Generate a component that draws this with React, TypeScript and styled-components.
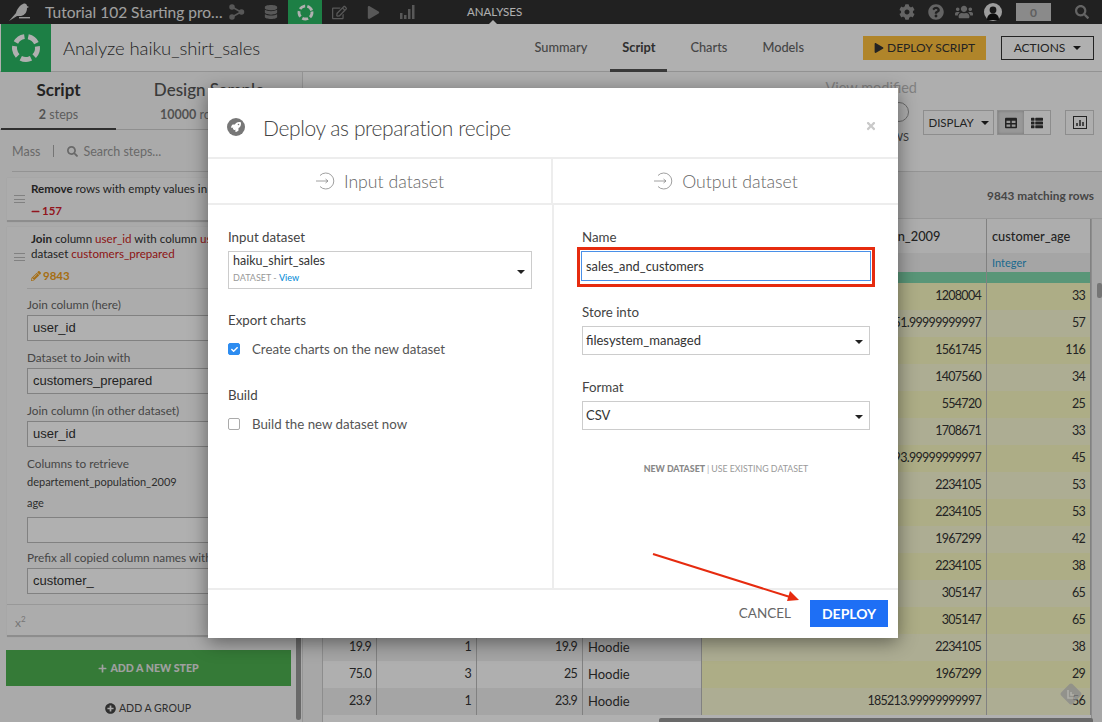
import React from "react";
import styled, { createGlobalStyle } from "styled-components";
import {
  FaCog, FaQuestionCircle, FaUsers, FaSearch, FaPencilAlt, FaPlus, FaPlusCircle, FaPlay,
  FaDatabase, FaRegEdit, FaTable, FaThList, FaCheck, FaTimes, FaRocket, FaMinus,
} from "react-icons/fa";

const SANS = `"Lato", "Open Sans", "Liberation Sans", sans-serif`;

const Global = createGlobalStyle`
  html, body { margin: 0; padding: 0; background: #fff; }
  * { box-sizing: border-box; }
  body { font-family: ${SANS}; color: #333; }
`;

const Page = styled.div`
  position: relative; width: 1102px; height: 722px; overflow: hidden;
  display: flex; flex-direction: column; background: #fff;
`;

/* top bar */
const TopBar = styled.div`
  height: 24px; flex: none; background: #313131; display: flex; align-items: center; position: relative; color: #ddd;
`;
const Logo = styled.svg` margin-left: 8px; width: 24px; height: 20px; flex: none; `;
const ProjectName = styled.div`
  width: 188px; padding-left: 13px; flex: none; font-size: 15.5px; color: #e8e8e8; white-space: nowrap;
`;
const NavIcon = styled.div<{ $active?: boolean }>`
  width: 34px; height: 24px; flex: none; display: flex; align-items: center; justify-content: center;
  background: ${(p) => (p.$active ? "#2ab864" : "transparent")};
  color: ${(p) => (p.$active ? "#fff" : "#808080")};
`;
const Section = styled.div`
  margin-left: 43px; width: 50px; font-size: 11.5px; color: #fff; text-align: center; position: relative; line-height: 24px; white-space: nowrap;
  &::after {
    content: ""; position: absolute; left: 22px; bottom: 0; border: 4px solid transparent; border-top: 0; border-bottom-color: #fff;
  }
`;
const TopRight = styled.div` margin-left: auto; display: flex; align-items: center; color: #919191; `;
const TopIcon = styled.div<{ $w: number }>`
  width: ${(p) => p.$w}px; display: flex; justify-content: center; align-items: center; height: 24px; flex: none;
`;
const Counter = styled.div`
  width: 35px; height: 18px; background: #c8c8c8; color: #8a8a8a; font-size: 12px; font-weight: 700;
  display: flex; align-items: center; justify-content: center; margin: 0 11px 0 8px;
`;

/* sub header */
const SubHeader = styled.div`
  height: 48px; flex: none; display: flex; align-items: center; border-bottom: 1px solid #d5d5d5; padding-left: 1px;
`;
const GreenSquare = styled.div`
  width: 50px; height: 48px; background: #2ab864; display: flex; align-items: center; justify-content: center; flex: none;
`;
const PageTitle = styled.div` margin-left: 12px; font-size: 18.5px; font-weight: 300; letter-spacing: -0.1px; color: #333; `;
const Tabs = styled.div` margin-left: auto; display: flex; gap: 11px; height: 48px; margin-right: 47px; `;
const Tab = styled.div<{ $on?: boolean }>`
  padding: 0 12px; font-size: 12.8px; line-height: 47px; font-weight: ${(p) => (p.$on ? 700 : 500)}; color: ${(p) => (p.$on ? "#444" : "#666")};
  border-bottom: 3px solid ${(p) => (p.$on ? "#555" : "transparent")};
`;
const DeployScript = styled.div`
  width: 123px; height: 24px; background: #ffc13d; color: #333; font-size: 12px; display: flex; align-items: center; justify-content: center; gap: 3px;
`;
const Actions = styled.div`
  width: 93px; height: 24px; margin: 0 8px 0 15px; border: 1px solid #333; color: #333; font-size: 12px; display: flex; align-items: center; justify-content: center; gap: 8px;
`;
const Caret = styled.span<{ $c?: string }>`
  display: inline-block; width: 0; height: 0; border: 4px solid transparent; border-bottom: 0; border-top: 4.5px solid ${(p) => p.$c || "#222"}; flex: none;
`;

/* main */
const Main = styled.div` flex: 1; display: flex; min-height: 0; `;
const LeftPanel = styled.div`
  width: 303px; flex: none; border-right: 1px solid #d8d8d8; background: #f7f7f7; display: flex; flex-direction: column; position: relative; overflow: hidden;
`;
const PanelTabs = styled.div` height: 58px; flex: none; display: flex; border-bottom: 1px solid #d0d0d0; padding-left: 1px; `;
const PanelTab = styled.div<{ $on?: boolean; $w: number }>`
  width: ${(p) => p.$w}px; text-align: center; border-bottom: ${(p) => (p.$on ? "2px solid #444" : "none")};
  height: 58px; white-space: nowrap;
`;
const PanelTabName = styled.div<{ $on?: boolean }>`
  font-size: 17px; line-height: 24px; margin-top: 6px; font-weight: ${(p) => (p.$on ? 700 : 500)}; color: ${(p) => (p.$on ? "#333" : "#555")};
`;
const PanelTabSub = styled.div<{ $pr?: number }>`
  font-size: 12.5px; line-height: 16px; margin-top: 5px; color: #888; padding-right: ${(p) => p.$pr || 0}px; b { color: #777; }
`;
const SearchRow = styled.div`
  height: 42px; flex: none; margin-left: 12px; padding-top: 1px; border-bottom: 1px solid #d5d5d5; display: flex; align-items: center; font-size: 12.5px; color: #999;
`;
const SearchSep = styled.span` width: 1px; height: 12px; background: #aaa; margin: 0 13px 0 13px; `;
const SearchHint = styled.span` margin-left: 5px; `;

const StepCard = styled.div<{ $h: number; $mt: number }>`
  margin: ${(p) => p.$mt}px 0 0 7px; width: 285px; height: ${(p) => p.$h}px; flex: none; background: #fafafa;
  border-bottom: 2px solid #ccc; position: relative; padding-left: 24px; box-shadow: 0 0 1px #ddd;
`;
const Handle = styled.div<{ $t: number }>`
  position: absolute; left: 7px; top: ${(p) => p.$t}px; width: 11px; height: 8px;
  border-top: 1px solid #bbb; border-bottom: 1px solid #bbb;
  &::after { content: ""; position: absolute; left: 0; right: 0; top: 2.5px; height: 1px; background: #bbb; }
`;
const StepLine = styled.div<{ $mt?: number }>`
  font-size: 11.6px; line-height: 15px; color: #333; white-space: nowrap; overflow: hidden; margin-top: ${(p) => p.$mt || 0}px;
  b { font-weight: 700; }
  em { font-style: normal; color: #c22; }
`;
const Delta = styled.div<{ $c: string; $mt: number }>`
  display: flex; align-items: center; gap: 2px; font-size: 11.5px; font-weight: 700; color: ${(p) => p.$c}; margin-top: ${(p) => p.$mt}px; line-height: 16px;
`;
const FieldsBox = styled.div` margin-left: -4px; `;
const Hr = styled.div` height: 1px; background: #ddd; margin: 4px 0 6px; `;
const FieldLabel = styled.div` font-size: 11.8px; line-height: 20px; color: #666; white-space: nowrap; `;
const Field = styled.div` height: 53px; `;
const SideInput = styled.div`
  height: 26px; width: 262px; border: 1px solid #bbb; background: #fff; padding-left: 5px; font-family: "Liberation Sans", sans-serif; font-size: 13px; line-height: 24px; color: #333;
`;
const EmptyInput = styled(SideInput)` margin: 2px 0 5px; `;
const SmallValue = styled.div<{ $h: number; $mt?: number }>`
  font-size: 11px; line-height: ${(p) => p.$h}px; color: #444; white-space: nowrap; margin-top: ${(p) => p.$mt || 0}px;
`;
const StepFoot = styled.div`
  position: absolute; left: 0; right: 0; bottom: 0; height: 31px; border-top: 1px solid #ddd; padding: 9px 0 0 8px; font-size: 12px; color: #aaa;
  sup { font-size: 8px; }
`;
const AddStep = styled.div`
  margin: 13px 0 0 6px; width: 285px; height: 36px; flex: none; background: #4db150; color: #e8e8e8; font-weight: 900; font-size: 10.6px;
  display: flex; align-items: center; justify-content: center; gap: 3px;
`;
const AddGroup = styled.div`
  margin-top: 16px; width: 296px; text-align: center; font-size: 10.6px; color: #444; display: flex; align-items: center; justify-content: center; gap: 3px;
`;
const PanelScroll = styled.div`
  position: absolute; left: 296px; width: 5px; top: 558px; height: 90px; border-radius: 3px; background: #999;
`;

/* right */
const RightPanel = styled.div` flex: 1; min-width: 0; display: flex; flex-direction: column; position: relative; `;
const Toolbar = styled.div`
  height: 100px; flex: none; display: flex; justify-content: flex-end; padding-right: 8px; border-bottom: 1px solid #d8d8d8; background: #fdfdfd;
`;
const ViewBlock = styled.div`
  width: 92px; margin-right: 5px; display: flex; flex-direction: column; align-items: flex-end; font-size: 14.5px; color: #bbb; white-space: nowrap; padding-top: 7px;
`;
const Toggle = styled.div` width: 20px; height: 20px; border-radius: 50%; border: 1px solid #999; margin: 6px 8px 0 0; `;
const Rows = styled.div` font-size: 11px; color: #555; margin: 8px 8px 0 0; `;
const ToolBtn = styled.div<{ $w: number; $ml: number }>`
  width: ${(p) => p.$w}px; margin-left: ${(p) => p.$ml}px; height: 25px; margin-top: 38px; border: 1px solid #ccc; display: flex; align-items: center; justify-content: center; gap: 7px; font-size: 11.5px; color: #333;
`;
const ToolGroup = styled.div` display: flex; margin: 38px 0 0 3px; height: 25px; border: 1px solid #ccc; width: 54px; `;
const ToolCell = styled.div<{ $on?: boolean }>`
  flex: 1; display: flex; align-items: center; justify-content: center; color: #333;
  background: ${(p) => (p.$on ? "#ddd" : "transparent")};
  box-shadow: ${(p) => (p.$on ? "inset 0 0 3px #aaa" : "none")};
`;
const Band = styled.div`
  height: 47px; flex: none; background: #f2f2f2; text-align: right; padding: 16px 8px 0 0; font-size: 11.8px; font-weight: 700; color: #666; border-bottom: 1px solid #ddd;
`;
const TableWrap = styled.div` flex: 1; display: flex; background: #f2f2f2; min-height: 0; `;
const Table = styled.div`
  margin-left: 19px; width: 770px; background: #fff; border-left: 1px solid #ccc; border-right: 1px solid #ccc; overflow: hidden; flex: none;
`;
const Cols = "54px 100px 106px 119px 285px 104px";
const HeadRow = styled.div`
  display: grid; grid-template-columns: ${Cols}; height: 34px; background: #fbfbfb;
`;
const TypeRow = styled.div` display: grid; grid-template-columns: ${Cols}; height: 19px; background: #efefef; `;
const BarRow = styled.div` display: grid; grid-template-columns: ${Cols}; height: 11px; background: #82d9ae; `;
const DataRow = styled.div<{ $alt: boolean }>`
  display: grid; grid-template-columns: ${Cols}; height: 27px; background: ${(p) => (p.$alt ? "#f0f0f0" : "#fefefe")};
`;
const HeadCell = styled.div`
  font-size: 12.8px; font-weight: 500; line-height: 34px; padding-left: 5px; border-right: 1px solid #bbb; white-space: nowrap; overflow: hidden; color: #333;
`;
const TypeCell = styled.div` font-size: 11px; line-height: 19px; padding-left: 5px; border-right: 1px solid #bbb; color: #2a9ad0; white-space: nowrap; overflow: hidden; `;
const BarCell = styled.div` border-right: 1px solid #bbb; `;
const Cell = styled.div<{ $num?: boolean; $y?: boolean; $alt?: boolean }>`
  font-size: ${(p) => (p.$num ? "12.5px" : "13px")}; letter-spacing: ${(p) => (p.$num ? "-0.7px" : "0")};
  line-height: 26px; padding: 0 5px; border-right: 1px solid #bbb; color: #333; white-space: nowrap; overflow: hidden;
  text-align: ${(p) => (p.$num ? "right" : "left")};
  background: ${(p) => (p.$y ? (p.$alt ? "#fbfbd5" : "#fbfbc2") : "transparent")};
`;
const RightThumb = styled.div` position: absolute; left: 794px; top: 211px; width: 5px; height: 15px; border-radius: 2px; background: #aaa; `;
const BottomThumb = styled.div` position: absolute; left: 356px; bottom: 0; width: 434px; height: 4px; border-radius: 2px 2px 0 0; background: #999; `;
const FeedMark = styled.svg` position: absolute; left: 755px; top: 609px; width: 26px; height: 26px; opacity: .75; `;

/* modal */
const Backdrop = styled.div` position: absolute; inset: 0; background: rgba(0,0,0,.31); `;
const Modal = styled.div`
  position: absolute; left: 208px; top: 88px; width: 690px; height: 550px; background: #fff; box-shadow: 0 4px 18px rgba(0,0,0,.45);
  display: flex; flex-direction: column;
`;
const ModalHead = styled.div`
  height: 71px; flex: none; display: flex; align-items: center; padding: 9px 0 0 19px; border-bottom: 2px solid #ededed; position: relative;
`;
const TitleBadge = styled.div`
  width: 18px; height: 18px; border-radius: 50%; background: #777; color: #fff; display: flex; align-items: center; justify-content: center; flex: none;
`;
const ModalTitle = styled.div` margin-left: 18px; font-size: 21px; font-weight: 300; letter-spacing: -0.4px; color: #444; `;
const Close = styled.div` position: absolute; left: 657px; top: 32px; color: #c9c9c9; line-height: 0; `;
const SectionRow = styled.div` height: 46px; flex: none; display: flex; border-bottom: 2px solid #ededed; `;
const SectionHead = styled.div<{ $w?: boolean }>`
  flex: 1; display: flex; align-items: center; justify-content: center; gap: 9px; font-size: 17.7px; font-weight: 300; color: #666;
  border-right: ${(p) => (p.$w ? "2px solid #ededed" : "0")};
  ${(p) => (p.$w ? "flex: 0 0 345px;" : "")}
`;
const Body = styled.div` flex: 1; display: flex; min-height: 0; `;
const ColLeft = styled.div` flex: 0 0 345px; border-right: 2px solid #ededed; padding: 22px 20px 0 20px; `;
const ColRight = styled.div` flex: 1; padding: 22px 28px 0 28px; `;
const Lab = styled.div<{ $mt?: number }>` font-size: 13.3px; line-height: 20px; color: #444; margin-top: ${(p) => p.$mt || 0}px; `;
const BigSelect = styled.div`
  margin-top: 4px; width: 304px; height: 38px; border: 1px solid #ccc; padding: 0 0 0 4px; position: relative;
`;
const BigName = styled.div` font-size: 12.5px; line-height: 18px; color: #333; `;
const BigSub = styled.div` font-size: 9px; line-height: 14px; margin-top: 1px; color: #999; b { color: #0b8ed8; font-weight: 500; } `;
const SelCaret = styled.div` position: absolute; right: 6px; top: 50%; margin-top: -2px; line-height: 0; `;
const CheckRow = styled.div<{ $mt: number }>`
  margin-top: ${(p) => p.$mt}px; display: flex; align-items: center; gap: 12px; height: 20px; font-size: 13.3px; color: #555;
`;
const CheckBox = styled.div<{ $on?: boolean }>`
  width: 12px; height: 12px; border-radius: 2px; background: ${(p) => (p.$on ? "#2d8cf0" : "#fff")}; border: 1px solid ${(p) => (p.$on ? "#2d8cf0" : "#aaa")};
  display: flex; align-items: center; justify-content: center; color: #fff; flex: none;
`;
const RedBox = styled.div` margin: 0 -5px; border: 3px solid #e62b0f; padding: 1px; height: 40px; `;
const NameInput = styled.div`
  height: 30px; border: 1px solid #4a90e8; padding-left: 4px; font-size: 12.8px; line-height: 28px; color: #333;
`;
const Sel = styled.div<{ $mt?: number }>`
  margin-top: ${(p) => p.$mt ?? 4}px; height: 29px; border: 1px solid #ccc; padding-left: 3px; font-size: 13px; line-height: 27px; color: #333; position: relative;
`;
const Links = styled.div`
  margin-top: 31px; text-align: center; font-size: 8.8px; line-height: 16px; color: #999; b { color: #888; font-weight: 900; }
  i { font-style: normal; color: #aaa; margin: 0 2px; }
`;
const ModalFoot = styled.div`
  height: 50px; flex: none; border-top: 2px solid #ededed; display: flex; align-items: center; justify-content: flex-end; padding: 0 10px 2px 0;
`;
const Cancel = styled.div` font-size: 13.5px; color: #666; margin-right: 19px; `;
const DeployBtn = styled.div`
  width: 78px; height: 27px; background: #1e6ff5; color: #fff; font-weight: 700; font-size: 14px; display: flex; align-items: center; justify-content: center;
`;
const Annotation = styled.svg` position: absolute; left: 0; top: 0; width: 1102px; height: 722px; pointer-events: none; `;

const Ring = ({ size, color }: { size: number; color: string }) => (
  <svg width={size} height={size} viewBox="0 0 24 24">
    <circle cx="12" cy="12" r="9.2" fill="none" stroke={color} strokeWidth="4" strokeDasharray="8.5 3.06" transform="rotate(-8.5 12 12)" />
  </svg>
);

const EnterIcon = () => (
  <svg width="20" height="20" viewBox="0 0 20 20" fill="none" stroke="#888" strokeWidth="0.8">
    <path d="M5 4.5 A8 8 0 1 1 5 15.5" />
    <path d="M1 10 H13 M10.5 8 L13 10 L10.5 12" />
  </svg>
);

const rows: [string, string, string, string, string, string][] = [
  ["19.9", "1", "19.9", "Hoodie", "1208004", "33"],
  ["23.9", "2", "47.8", "Hoodie", "185151.99999999997", "57"],
  ["19.9", "1", "19.9", "Hoodie", "1561745", "116"],
  ["23.9", "1", "23.9", "Hoodie", "1407560", "34"],
  ["75.0", "1", "75", "Hoodie", "554720", "25"],
  ["19.9", "3", "59.7", "Hoodie", "1708671", "33"],
  ["23.9", "1", "23.9", "Hoodie", "185193.99999999997", "45"],
  ["19.9", "1", "19.9", "Hoodie", "2234105", "53"],
  ["75.0", "2", "150", "Hoodie", "2234105", "53"],
  ["23.9", "1", "23.9", "Hoodie", "1967299", "42"],
  ["19.9", "1", "19.9", "Hoodie", "2234105", "38"],
  ["23.9", "2", "47.8", "Hoodie", "305147", "65"],
  ["75.0", "1", "75", "Hoodie", "305147", "65"],
  ["19.9", "1", "19.9", "Hoodie", "2234105", "38"],
  ["75.0", "3", "25", "Hoodie", "1967299", "29"],
  ["23.9", "1", "23.9", "Hoodie", "185213.99999999997", "56"],
];
const heads = ["tshirt_price", "tshirt_quantity", "total", "category", "customer_departement_population_2009", "customer_age"];
const types = ["Decimal", "Integer", "Decimal", "Text", "Decimal", "Integer"];

export default function App() {
  return (
    <Page>
      <Global />
      <TopBar>
        <Logo viewBox="0 0 24 20">
          <path d="M1 19 L8 11 C9 7 12 3 15 2 C17 1 19 2 19 4 L21 5 L19 6 C19 10 17 13 13 14 L9 14 Z" fill="#ddd" />
          <rect x="11" y="15" width="11" height="1.4" fill="#ddd" />
        </Logo>
        <ProjectName>Tutorial 102 Starting pro…</ProjectName>
        <NavIcon>
          <svg width="16" height="16" viewBox="0 0 16 16" fill="none" stroke="#808080" strokeWidth="1.5">
            <path d="M3 3 L12 8 L3 13" />
            <circle cx="3" cy="3" r="2" fill="#808080" />
            <circle cx="12.5" cy="8" r="2" fill="#808080" />
            <circle cx="3" cy="13" r="2" fill="#808080" />
          </svg>
        </NavIcon>
        <NavIcon><FaDatabase size={14} /></NavIcon>
        <NavIcon $active><Ring size={17} color="#fff" /></NavIcon>
        <NavIcon><FaRegEdit size={15} /></NavIcon>
        <NavIcon><FaPlay size={13} /></NavIcon>
        <NavIcon>
          <svg width="16" height="16" viewBox="0 0 16 16" fill="#808080">
            <rect x="1" y="9" width="2.5" height="6" />
            <rect x="5" y="11" width="2.5" height="4" />
            <rect x="9" y="5" width="2.5" height="10" />
            <rect x="13" y="1" width="2.5" height="14" />
          </svg>
        </NavIcon>
        <Section>ANALYSES</Section>
        <TopRight>
          <TopIcon $w={29}><FaCog size={16} /></TopIcon>
          <TopIcon $w={29}><FaQuestionCircle size={16} /></TopIcon>
          <TopIcon $w={28}><FaUsers size={18} /></TopIcon>
          <TopIcon $w={30}>
            <svg width="18" height="18" viewBox="0 0 18 18">
              <circle cx="9" cy="9" r="9" fill="#e4e4e4" />
              <circle cx="9" cy="7" r="3.4" fill="#222" />
              <path d="M3 17 C3 12 6 10.5 9 10.5 C12 10.5 15 12 15 17 Z" fill="#111" />
            </svg>
          </TopIcon>
          <Counter>0</Counter>
          <TopIcon $w={40}><FaSearch size={14} /></TopIcon>
        </TopRight>
      </TopBar>

      <SubHeader>
        <GreenSquare><Ring size={30} color="#fff" /></GreenSquare>
        <PageTitle>Analyze haiku_shirt_sales</PageTitle>
        <Tabs>
          <Tab>Summary</Tab>
          <Tab $on>Script</Tab>
          <Tab>Charts</Tab>
          <Tab>Models</Tab>
        </Tabs>
        <DeployScript><FaPlay size={10} />DEPLOY SCRIPT</DeployScript>
        <Actions>ACTIONS <Caret /></Actions>
      </SubHeader>

      <Main>
        <LeftPanel>
          <PanelTabs>
            <PanelTab $on $w={115}>
              <PanelTabName $on>Script</PanelTabName>
              <PanelTabSub><b>2</b> steps</PanelTabSub>
            </PanelTab>
            <PanelTab $w={186}>
              <PanelTabName>Design Sample</PanelTabName>
              <PanelTabSub $pr={32}><b>10000</b> rows</PanelTabSub>
            </PanelTab>
          </PanelTabs>
          <SearchRow>
            Mass<SearchSep /><FaSearch size={11} /><SearchHint>Search steps...</SearchHint>
          </SearchRow>
          <StepCard $h={44} $mt={6}>
            <Handle $t={17} />
            <StepLine $mt={3}><b>Remove</b> rows with empty values in customer</StepLine>
            <Delta $c="#d41f2e" $mt={7}><FaMinus size={9} /> 157</Delta>
          </StepCard>
          <StepCard $h={410} $mt={5}>
            <Handle $t={26} />
            <StepLine $mt={4}><b>Join</b> column <em>user_id</em> with column <em>user_id</em> of</StepLine>
            <StepLine>dataset <em>customers_prepared</em></StepLine>
            <Delta $c="#f0a020" $mt={7}><FaPencilAlt size={10} /> 9843</Delta>
            <FieldsBox>
              <Hr />
              <Field><FieldLabel>Join column (here)</FieldLabel><SideInput>user_id</SideInput></Field>
              <Field><FieldLabel>Dataset to Join with</FieldLabel><SideInput>customers_prepared</SideInput></Field>
              <Field><FieldLabel>Join column (in other dataset)</FieldLabel><SideInput>user_id</SideInput></Field>
              <FieldLabel>Columns to retrieve</FieldLabel>
              <SmallValue $h={18} $mt={-1}>departement_population_2009</SmallValue>
              <SmallValue $h={24}>age</SmallValue>
              <EmptyInput />
              <Field><FieldLabel>Prefix all copied column names with</FieldLabel><SideInput>customer_</SideInput></Field>
            </FieldsBox>
            <StepFoot>x<sup>2</sup></StepFoot>
          </StepCard>
          <AddStep><FaPlus size={9} /> ADD A NEW STEP</AddStep>
          <AddGroup><FaPlusCircle size={11} /> ADD A GROUP</AddGroup>
          <PanelScroll />
        </LeftPanel>

        <RightPanel>
          <Toolbar>
            <ViewBlock>
              View modified
              <Toggle />
              <Rows>ROWS</Rows>
            </ViewBlock>
            <ToolBtn $w={71} $ml={1}>DISPLAY <Caret /></ToolBtn>
            <ToolGroup>
              <ToolCell $on><FaTable size={12} /></ToolCell>
              <ToolCell><FaThList size={12} /></ToolCell>
            </ToolGroup>
            <ToolBtn $w={29} $ml={14}>
              <svg width="14" height="13" viewBox="0 0 14 13" fill="none" stroke="#333">
                <rect x="0.5" y="0.5" width="13" height="12" />
                <path d="M4 10V7 M7 10V4 M10 10V6" strokeWidth="1.5" />
              </svg>
            </ToolBtn>
          </Toolbar>
          <Band>9843 matching rows</Band>
          <TableWrap>
            <Table>
              <HeadRow>{heads.map((h) => <HeadCell key={h}>{h}</HeadCell>)}</HeadRow>
              <TypeRow>{types.map((t, i) => <TypeCell key={i}>{t}</TypeCell>)}</TypeRow>
              <BarRow>{heads.map((h) => <BarCell key={h} />)}</BarRow>
              {rows.map((r, i) => (
                <DataRow key={i} $alt={i % 2 === 1}>
                  <Cell $num>{r[0]}</Cell>
                  <Cell $num>{r[1]}</Cell>
                  <Cell $num>{r[2]}</Cell>
                  <Cell>{r[3]}</Cell>
                  <Cell $num $y $alt={i % 2 === 1}>{r[4]}</Cell>
                  <Cell $num $y $alt={i % 2 === 1}>{r[5]}</Cell>
                </DataRow>
              ))}
            </Table>
          </TableWrap>
          <RightThumb />
          <BottomThumb />
          <FeedMark viewBox="0 0 26 26">
            <rect x="5" y="5" width="16" height="16" rx="2" transform="rotate(45 13 13)" fill="#c8c8c8" />
            <path d="M10 9 L10 17 L17 17 M13 11 L13 14 L16 14" fill="none" stroke="#fff" strokeWidth="1.6" />
          </FeedMark>
        </RightPanel>
      </Main>

      <Backdrop />
      <Modal>
        <ModalHead>
          <TitleBadge><FaRocket size={10} /></TitleBadge>
          <ModalTitle>Deploy as preparation recipe</ModalTitle>
          <Close><FaTimes size={12} /></Close>
        </ModalHead>
        <SectionRow>
          <SectionHead $w><EnterIcon />Input dataset</SectionHead>
          <SectionHead><EnterIcon />Output dataset</SectionHead>
        </SectionRow>
        <Body>
          <ColLeft>
            <Lab>Input dataset</Lab>
            <BigSelect>
              <BigName>haiku_shirt_sales</BigName>
              <BigSub>DATASET - <b>View</b></BigSub>
              <SelCaret><Caret /></SelCaret>
            </BigSelect>
            <Lab $mt={21}>Export charts</Lab>
            <CheckRow $mt={9}><CheckBox $on><FaCheck size={7} /></CheckBox>Create charts on the new dataset</CheckRow>
            <Lab $mt={26}>Build</Lab>
            <CheckRow $mt={9}><CheckBox />Build the new dataset now</CheckRow>
          </ColLeft>
          <ColRight>
            <Lab>Name</Lab>
            <RedBox><NameInput>sales_and_customers</NameInput></RedBox>
            <Lab $mt={15}>Store into</Lab>
            <Sel>filesystem_managed<SelCaret><Caret /></SelCaret></Sel>
            <Lab $mt={22}>Format</Lab>
            <Sel>CSV<SelCaret><Caret /></SelCaret></Sel>
            <Links><b>NEW DATASET</b><i>|</i>USE EXISTING DATASET</Links>
          </ColRight>
        </Body>
        <ModalFoot>
          <Cancel>CANCEL</Cancel>
          <DeployBtn>DEPLOY</DeployBtn>
        </ModalFoot>
      </Modal>
      <Annotation viewBox="0 0 1102 722">
        <line x1="653" y1="554" x2="790" y2="597" stroke="#e62b0f" strokeWidth="2" />
        <polygon points="799,600 787,601 790,591" fill="#e62b0f" />
      </Annotation>
    </Page>
  );
}
